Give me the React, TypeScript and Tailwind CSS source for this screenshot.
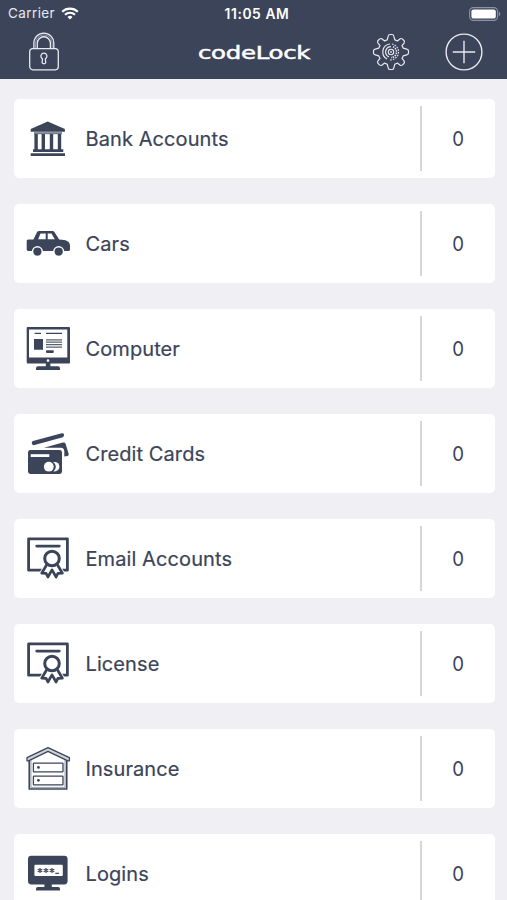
import type { ReactNode } from 'react'

const INK = '#3b4459'

const Glyph = ({ children }: { children: ReactNode }) => (
  <svg width="44" height="44" viewBox="0 0 44 44" fill={INK} className="shrink-0 overflow-visible">
    {children}
  </svg>
)

const BankIcon = () => (
  <Glyph>
    <path d="M21.7 4.5 38.9 12v2.8H4.7V12Z" />
    <path d="M8 15.2h28v2H8Z" opacity=".7" />
    <path d="M8.4 17h3.4v16H8.4ZM15.6 17H19v16h-3.4ZM23.8 17h3.4v16h-3.4ZM31.8 17h3.4v16h-3.4Z" />
    <path d="M7 32.3h30.3v2.7H7ZM4.7 36.3h34.3v2.8H4.7Z" />
  </Glyph>
)

const CarIcon = () => (
  <Glyph>
    <path
      fillRule="evenodd"
      d="M13 9h13.2c1 0 1.6.3 2.2 1.1l4.8 7.5 5 .5c3.4.5 5.8 2.6 5.8 5.6v3.6c0 1-.5 1.6-1.5 1.6H2.2c-1 0-1.5-.6-1.5-1.6v-7.8c0-1.2.5-1.9 1.7-1.9h5L10.6 11c.5-1.3 1.1-2 2.4-2Zm1.5 2.6-2.3 5.6h7.5v-5.6Zm7.2 0v5.6h7.1l-3.4-5.6Z"
    />
    <circle cx="11.4" cy="29.6" r="5.6" fill="#fff" />
    <circle cx="32.7" cy="29.6" r="5.6" fill="#fff" />
    <circle cx="11.4" cy="29.6" r="4.1" />
    <circle cx="32.7" cy="29.6" r="4.1" />
  </Glyph>
)

const ComputerIcon = () => (
  <Glyph>
    <path fillRule="evenodd" d="M1.6 0h41.5q.9 0 .9.9v34.6q0 .9-.9.9H1.6q-.9 0-.9-.9V.9q0-.9.9-.9ZM3 2.6v27.8h38.3V2.6Z" />
    <path d="M19.8 36h4.6v3.2h7.6q2 0 2 2V43H10v-1.8q0-2 2-2h7.8Z" />
    <circle cx="22" cy="33.6" r="1.3" fill="#fff" />
    <path d="M8.7 5.8H15V7H8.7ZM20 5.8h16V7H20ZM8 12h9v10.8H8Z" />
    <path d="M20 12.2h16v1.2H20ZM20 14.6h16v1.2H20ZM20 17h16v1.2H20ZM20 19.5h16v1.2H20Z" opacity=".85" />
    <rect x="20" y="23.2" width="7.8" height="2.7" rx=".8" />
  </Glyph>
)

const CreditCardIcon = () => (
  <Glyph>
    <path d="M7 8.9 35.7 1.3q2-.3 2.3 1.2.2 2-1.2 2.7L7.6 13.3q-1.6-.1-1.9-2.2 0-1.7 1.3-2.2Z" />
    <path d="m18 15.7 18.8-5.2q2.2-.5 2.8 1.3L42.7 22q.2 1.5-1.2 2l-3.2.6v-5.4q-.2-3.2-3.2-3.5Z" />
    <rect x="2" y="18" width="34" height="24" rx="2.4" />
    <path fill="#fff" d="M4.7 22.2h18.6V25H4.7Z" />
    <circle cx="28.6" cy="34.7" r="4.8" fill="#fff" />
    <circle cx="24.6" cy="34.7" r="5.2" />
    <circle cx="22.8" cy="34.7" r="4.9" fill="#fff" />
  </Glyph>
)

const CertificateIcon = () => (
  <Glyph>
    <g fill="none" stroke={INK} strokeWidth="2.8" strokeLinejoin="round">
      <path d="M2.6 1.9h38.8v31.3H2.6Z" />
      <path d="M10.7 9.1h22.6" strokeLinecap="round" />
      <path d="m20.7 27.8-5 8.6 4.2.2 2 3.8L26 32.8l4.1 7.6 2-3.8 4.3-.2-5-8.6" fill="#fff" stroke="#fff" strokeWidth="4.6" />
      <path d="m20.7 27.8-5 8.4 4.4.2 1.8 3.6L26 32.8l4.1 7.2 1.8-3.6 4.5-.2-5-8.4" fill="#fff" strokeWidth="2.7" />
      <circle cx="26" cy="21.5" r="7.3" fill="#fff" strokeWidth="3" />
    </g>
  </Glyph>
)

const HouseIcon = () => (
  <Glyph>
    <g fill="none" stroke={INK} strokeWidth="1.3" strokeLinejoin="round">
      <path d="M3.3 14v28h37.4V14" strokeWidth="1.7" />
      <path d="M5 13v27.4h34V13" strokeWidth=".5" />
      <path d="M1 10.6 22 .7l21.4 9.9v3.2h-1.6L22 4.4 2.5 13.8H1Z" fill="#d0d3da" />
      <rect x="7.4" y="16.2" width="29.6" height="8.6" rx=".6" />
      <rect x="7.4" y="29.2" width="29.6" height="8.6" rx=".6" />
    </g>
    <circle cx="12.4" cy="20.4" r="1.4" />
    <circle cx="12.4" cy="33.3" r="1.4" />
  </Glyph>
)

const LoginIcon = () => (
  <Glyph>
    <rect x="2" y="3.8" width="39.6" height="28.6" rx="3.4" />
    <rect x="8.4" y="12.8" width="28.4" height="11.2" rx="1" fill="#fff" />
    <path d="M18.4 32h7.4v3h6.4q1.8 0 1.8 1.8v1.7H10v-1.7q0-1.8 1.8-1.8h6.6Z" />
    <path
      fill="none"
      stroke={INK}
      strokeWidth="1.2"
      d="M14 16v5M11.7 17.2l4.6 2.6M16.3 17.2l-4.6 2.6M20 16v5M17.7 17.2l4.6 2.6M22.3 17.2l-4.6 2.6M26 16v5M23.7 17.2l4.6 2.6M28.3 17.2l-4.6 2.6M29.3 21.3h3.6"
    />
  </Glyph>
)

const LockIcon = () => (
  <svg width="32" height="40" viewBox="0 0 32 40" fill="none" stroke="#e6e9f0" strokeWidth="1.3">
    <rect x="1.7" y="16.6" width="28.6" height="21.2" rx="3.2" />
    <path d="M5.9 16.4v-5.3a9.8 9.8 0 0 1 19.9 0v5.3M9.3 16.4v-5.1a6.5 6.5 0 0 1 13.1 0v5.1" />
    <path d="M7.6 16.4v-5.2a8.2 8.2 0 0 1 16.5 0v5.2" strokeWidth=".5" />
    <path d="M14.4 26.7a3 3 0 1 1 3 0l.3 4.2q-1.8 1.8-3.6 0Z" />
  </svg>
)

const GearIcon = () => (
  <svg width="38" height="38" viewBox="-19 -19 38 38" fill="none" stroke="#e6e9f0" strokeWidth="1.2" strokeLinejoin="round">
    <path d="M-2.8-15.8Q-2.5-17.5-1-17.5H1Q2.5-17.5 2.8-15.8L3.8-12.2Q5.2-11.8 6.4-11L9.2-13.2Q10.4-13.9 11.5-12.9L12.9-11.5Q13.9-10.4 13.2-9.2L11-6.4Q11.8-5.2 12.2-3.8L15.8-2.8Q17.5-2.5 17.5-1V1Q17.5 2.5 15.8 2.8L12.2 3.8Q11.8 5.2 11 6.4L13.2 9.2Q13.9 10.4 12.9 11.5L11.5 12.9Q10.4 13.9 9.2 13.2L6.4 11Q5.2 11.8 3.8 12.2L2.8 15.8Q2.5 17.5 1 17.5H-1Q-2.5 17.5-2.8 15.8L-3.8 12.2Q-5.2 11.8-6.4 11L-9.2 13.2Q-10.4 13.9-11.5 12.9L-12.9 11.5Q-13.9 10.4-13.2 9.2L-11 6.4Q-11.8 5.2-12.2 3.8L-15.8 2.8Q-17.5 2.5-17.5 1V-1Q-17.5-2.5-15.8-2.8L-12.2-3.8Q-11.8-5.2-11-6.4L-13.2-9.2Q-13.9-10.4-12.9-11.5L-11.5-12.9Q-10.4-13.9-9.2-13.2L-6.4-11Q-5.2-11.8-3.8-12.2Z" />
    <path d="M-1-8A8 8 0 0 0-4 7" />
    <path d="M1-8A8 8 0 0 1-2 7.8" strokeDasharray="1.6 1.2" strokeWidth="1.1" />
    <path d="M0-5.4A5.4 5.4 0 0 0-2 5" />
    <path d="M2-5.2A5.6 5.6 0 0 1 0 5.6" strokeDasharray="1.4 1" strokeWidth="1.6" />
    <circle r="2.7" strokeWidth="1.1" />
    <circle r=".9" fill="#e6e9f0" stroke="none" />
  </svg>
)

const PlusIcon = () => (
  <svg width="38" height="38" viewBox="0 0 38 38" fill="none" stroke="#e6e9f0" strokeWidth="1.4">
    <circle cx="19" cy="19" r="17.9" />
    <path d="M19 7.8v22.4M7.8 19h22.4" />
  </svg>
)

const WifiIcon = () => (
  <svg width="18" height="13" viewBox="0 0 18 13" fill="none" stroke="#fff" strokeWidth="2.1">
    <path d="M1.2 4.8a11.2 11.2 0 0 1 15.6 0M4 7.8a7.1 7.1 0 0 1 10 0" />
    <path d="M9 12.6 6.5 10a3.6 3.6 0 0 1 5 0Z" fill="#fff" stroke="none" />
  </svg>
)

const BatteryIcon = () => (
  <svg width="32" height="14" viewBox="0 0 32 14">
    <rect x=".6" y=".6" width="28" height="12.8" rx="3.8" fill="none" stroke="#8e93a1" strokeWidth="1.1" />
    <rect x="2.4" y="2.4" width="24.4" height="9.2" rx="2.2" fill="#fff" />
    <path d="M29.9 4.8q1.4.6 1.4 2.2t-1.4 2.2Z" fill="#8e93a1" />
  </svg>
)

const CATEGORIES: { label: string; count: number; icon: ReactNode }[] = [
  { label: 'Bank Accounts', count: 0, icon: <BankIcon /> },
  { label: 'Cars', count: 0, icon: <CarIcon /> },
  { label: 'Computer', count: 0, icon: <ComputerIcon /> },
  { label: 'Credit Cards', count: 0, icon: <CreditCardIcon /> },
  { label: 'Email Accounts', count: 0, icon: <CertificateIcon /> },
  { label: 'License', count: 0, icon: <CertificateIcon /> },
  { label: 'Insurance', count: 0, icon: <HouseIcon /> },
  { label: 'Logins', count: 0, icon: <LoginIcon /> },
]

function Header() {
  return (
    <header className="h-[79px] shrink-0 bg-[#3c4459] text-white">
      <div className="grid h-[27px] grid-cols-3 items-center pr-[6px] pl-[8px] text-[13.5px] leading-none">
        <div className="flex items-center gap-[6px] tracking-[.4px] text-[#e6e9f0]">
          <span className="pt-[1px]">Carrier</span>
          <WifiIcon />
        </div>
        <div className="pt-[2px] pl-[5px] text-center text-[13.8px] font-semibold tracking-[.6px] whitespace-nowrap">11:05 AM</div>
        <div className="flex justify-end">
          <BatteryIcon />
        </div>
      </div>
      <div className="grid h-[50px] grid-cols-3 items-center pr-[24px] pl-[28px]">
        <button className="justify-self-start">
          <LockIcon />
        </button>
        <h1 className="origin-center scale-x-[1.42] justify-self-center pt-[3px] pr-[2px] font-['DejaVu_Sans',sans-serif] text-[17.2px] leading-none tracking-[-.2px] [-webkit-text-stroke:.5px_white]">
          codeLock
        </h1>
        <div className="flex gap-[35px] justify-self-end">
          <button><GearIcon /></button>
          <button><PlusIcon /></button>
        </div>
      </div>
    </header>
  )
}

export default function App() {
  return (
    <div className="flex h-[900px] w-full flex-col overflow-hidden bg-[#efeff4] font-['Inter',sans-serif] text-[#3b4459]">
      <Header />
      <ul className="flex flex-col gap-[26px] pt-[20px] pr-[12px] pl-[14px]">
        {CATEGORIES.map((item) => (
          <li key={item.label} className="flex h-[79px] shrink-0 items-center rounded-[5px] bg-white pl-[12px]">
            {item.icon}
            <span className="ml-[15.5px] flex-1 text-[20px] tracking-[.09px] [-webkit-text-stroke:.2px_#3b4459]">{item.label}</span>
            <span className="h-[65px] w-[2px] bg-[#d6d6d9]" />
            <span className="w-[73px] scale-x-[.93] pr-[1px] text-center text-[20px]">{item.count}</span>
          </li>
        ))}
      </ul>
    </div>
  )
}
